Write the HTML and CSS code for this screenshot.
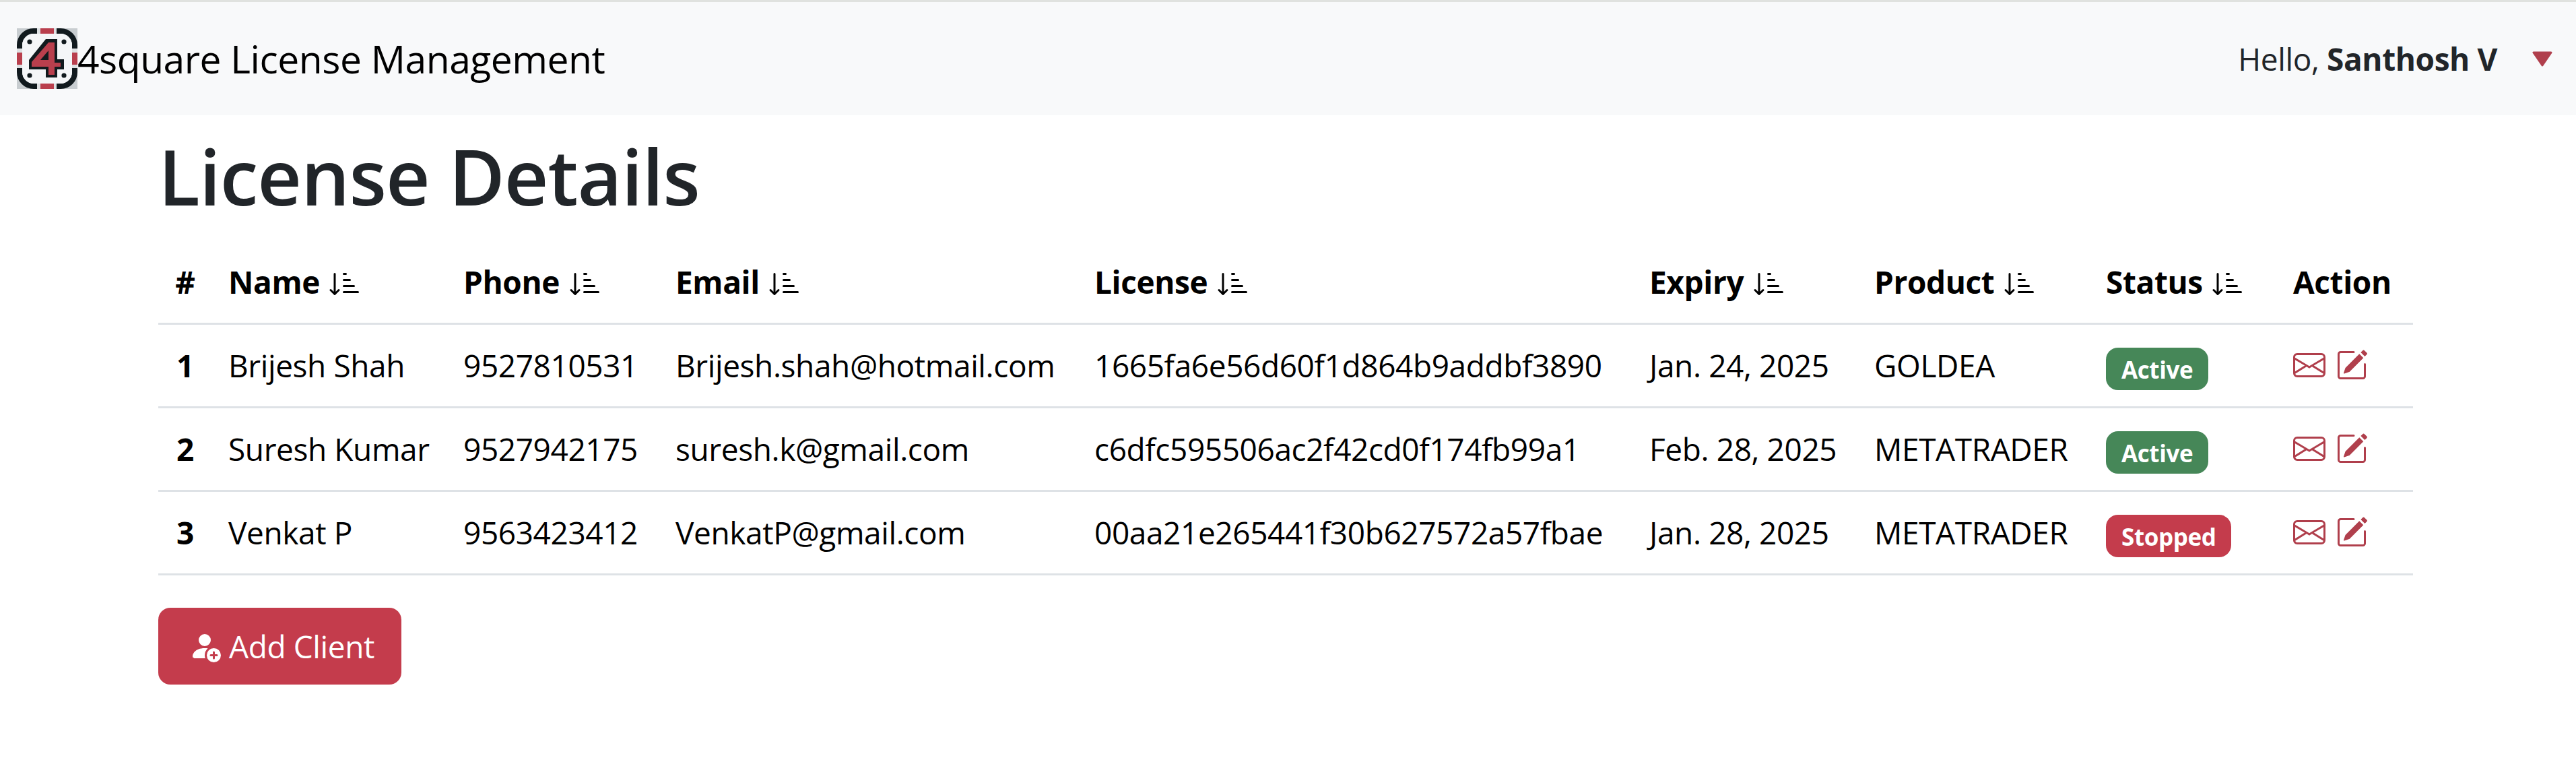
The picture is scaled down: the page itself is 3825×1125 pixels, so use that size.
FILE: index.html
```html
<!DOCTYPE html>
<html lang="en">
<head>
<meta charset="utf-8">
<title>4square License Management</title>
<link rel="stylesheet" href="styles.css">
</head>
<body>
<svg width="0" height="0" class="defs">
  <defs>
    <symbol id="sort" viewBox="0 0 16 16"><path d="M3.5 3.5a.5.5 0 0 0-1 0v8.793l-1.146-1.147a.5.5 0 0 0-.708.708l2 1.999.007.007a.497.497 0 0 0 .7-.006l2-2a.5.5 0 0 0-.707-.708L3.5 12.293V3.5zm4 .5a.5.5 0 0 1 0-1h1a.5.5 0 0 1 0 1h-1zm0 3a.5.5 0 0 1 0-1h3a.5.5 0 0 1 0 1h-3zm0 3a.5.5 0 0 1 0-1h5a.5.5 0 0 1 0 1h-5zM7 12.5a.5.5 0 0 0 .5.5h7a.5.5 0 0 0 0-1h-7a.5.5 0 0 0-.5.5z"/></symbol>
    <symbol id="mail" viewBox="0 0 16 16"><path d="M0 4a2 2 0 0 1 2-2h12a2 2 0 0 1 2 2v8a2 2 0 0 1-2 2H2a2 2 0 0 1-2-2V4Zm2-1a1 1 0 0 0-1 1v.217l7 4.2 7-4.2V4a1 1 0 0 0-1-1H2Zm13 2.383-4.708 2.825L15 11.105V5.383Zm-.034 6.876-5.64-3.471L8 9.583l-1.326-.795-5.64 3.47A1 1 0 0 0 2 13h12a1 1 0 0 0 .966-.741ZM1 11.105l4.708-2.897L1 5.383v5.722Z"/></symbol>
    <symbol id="edit" viewBox="0 0 16 16"><path d="M15.502 1.94a.5.5 0 0 1 0 .706L14.459 3.69l-2-2L13.502.646a.5.5 0 0 1 .707 0l1.293 1.293zm-1.75 2.456-2-2L4.939 9.21a.5.5 0 0 0-.121.196l-.805 2.414a.25.25 0 0 0 .316.316l2.414-.805a.5.5 0 0 0 .196-.12l6.813-6.814z"/><path d="M1 13.5A1.5 1.5 0 0 0 2.5 15h11a1.5 1.5 0 0 0 1.5-1.5v-6a.5.5 0 0 0-1 0v6a.5.5 0 0 1-.5.5h-11a.5.5 0 0 1-.5-.5v-11a.5.5 0 0 1 .5-.5H9a.5.5 0 0 0 0-1H2.5A1.5 1.5 0 0 0 1 2.5v11z"/></symbol>
  </defs>
</svg>
<nav class="navbar">
  <a class="brand" href="#">
    <svg class="logo" viewBox="0 0 90 90">
      <rect width="90" height="90" fill="#c8cdd0"/>
      <rect x="4" y="4" width="82" height="82" rx="21" fill="#f4f6f8" stroke="#111a1e" stroke-width="8"/>
      <rect x="30" y="0" width="5" height="90" fill="#dde0e2"/>
      <rect x="55" y="0" width="4" height="90" fill="#dde0e2"/>
      <rect x="0" y="30" width="90" height="6" fill="#dde0e2"/>
      <rect x="0" y="54" width="90" height="5" fill="#dde0e2"/>
      <rect x="8" y="8" width="74" height="74" rx="17" fill="#f4f6f8"/>
      <rect x="35" y="0" width="20" height="8" fill="#b93f4d"/>
      <rect x="35" y="82" width="20" height="8" fill="#b93f4d"/>
      <rect x="0" y="36" width="8" height="18" fill="#b93f4d"/>
      <rect x="82" y="36" width="8" height="18" fill="#b93f4d"/>
      <circle cx="19" cy="20" r="3.6" fill="#111a1e"/><circle cx="70" cy="20" r="3.6" fill="#111a1e"/>
      <circle cx="19" cy="70" r="3.6" fill="#111a1e"/><circle cx="70" cy="70" r="3.6" fill="#111a1e"/>
      <polygon points="43,16 60,16 60,46 70,46 70,61 60,61 60,73 43,73 43,61 18,61 18,47" fill="#111a1e"/>
      <polygon points="47,21 56,21 56,51 65,51 65,57 56,57 56,69 47,69 47,57 22,57 22,50" fill="#b93f4d"/>
      <polygon points="47,33 47,47 35,47" fill="#111a1e"/>
    </svg><span class="brand-text">4square License Management</span>
  </a>
  <div class="user">
    <span class="hello">Hello, <strong>Santhosh V</strong></span>
    <svg class="caret" viewBox="0 0 30 23"><path d="M2 2 H28 L15 21 Z"/></svg>
  </div>
</nav>
<main class="container">
  <h1 class="title">License Details</h1>
  <table class="table">
    <colgroup>
      <col class="c-num"><col class="c-name"><col class="c-phone"><col class="c-email"><col class="c-license"><col class="c-expiry"><col class="c-product"><col class="c-status"><col class="c-action">
    </colgroup>
    <thead>
      <tr>
        <th class="num">#</th>
        <th>Name <svg class="sort"><use href="#sort"/></svg></th>
        <th>Phone <svg class="sort"><use href="#sort"/></svg></th>
        <th>Email <svg class="sort"><use href="#sort"/></svg></th>
        <th>License <svg class="sort"><use href="#sort"/></svg></th>
        <th>Expiry <svg class="sort"><use href="#sort"/></svg></th>
        <th>Product <svg class="sort"><use href="#sort"/></svg></th>
        <th>Status <svg class="sort"><use href="#sort"/></svg></th>
        <th class="action-head">Action</th>
      </tr>
    </thead>
    <tbody>
      <tr>
        <th class="num">1</th><td>Brijesh Shah</td><td>9527810531</td><td>Brijesh.shah@hotmail.com</td><td>1665fa6e56d60f1d864b9addbf3890</td><td>Jan. 24, 2025</td><td>GOLDEA</td>
        <td><span class="badge active">Active</span></td>
        <td><div class="actions"><svg class="act"><use href="#mail"/></svg><svg class="act"><use href="#edit"/></svg></div></td>
      </tr>
      <tr>
        <th class="num">2</th><td>Suresh Kumar</td><td>9527942175</td><td>suresh.k@gmail.com</td><td>c6dfc595506ac2f42cd0f174fb99a1</td><td>Feb. 28, 2025</td><td>METATRADER</td>
        <td><span class="badge active">Active</span></td>
        <td><div class="actions"><svg class="act"><use href="#mail"/></svg><svg class="act"><use href="#edit"/></svg></div></td>
      </tr>
      <tr>
        <th class="num">3</th><td>Venkat P</td><td>9563423412</td><td>VenkatP@gmail.com</td><td>00aa21e265441f30b627572a57fbae</td><td>Jan. 28, 2025</td><td>METATRADER</td>
        <td><span class="badge stopped">Stopped</span></td>
        <td><div class="actions"><svg class="act"><use href="#mail"/></svg><svg class="act"><use href="#edit"/></svg></div></td>
      </tr>
    </tbody>
  </table>
  <a class="btn" href="#">
    <svg class="btn-icon" viewBox="0 0 16 16"><path d="M12.5 16a3.5 3.5 0 1 0 0-7 3.5 3.5 0 0 0 0 7Zm.5-5v1h1a.5.5 0 0 1 0 1h-1v1a.5.5 0 0 1-1 0v-1h-1a.5.5 0 0 1 0-1h1v-1a.5.5 0 0 1 1 0Zm-2-6a3 3 0 1 1-6 0 3 3 0 0 1 6 0Z"/><path d="M2 13c0 1 1 1 1 1h5.256A4.493 4.493 0 0 1 8 12.5a4.49 4.49 0 0 1 1.544-3.393C9.077 9.038 8.564 9 8 9c-5 0-6 3-6 4Z"/></svg>
    <span>Add Client</span>
  </a>
</main>
</body>
</html>
```
FILE: styles.css
```css
* { box-sizing: border-box; }
html, body { margin: 0; padding: 0; }
body {
  background: #fff;
  color: #212529;
  font-family: "Open Sans", "Noto Sans", sans-serif;
  font-size: 46px;
  line-height: 72px;
  letter-spacing: -0.4px;
}
.defs { position: absolute; }
a { text-decoration: none; }

.navbar {
  display: flex;
  align-items: center;
  justify-content: space-between;
  height: 171px;
  border-top: 3px solid #e0e2df;
  background: #f8f9fa;
  padding: 0 35px 0 25px;
}
.brand { display: flex; align-items: center; color: #000; }
.logo { width: 90px; height: 90px; display: block; }
.brand-text { font-size: 57px; line-height: 90px; letter-spacing: -0.5px; }
.user { display: flex; align-items: center; gap: 52px; }
.hello { line-height: 72px; }
.caret { width: 30px; height: 23px; fill: #b03f4c; stroke: #b03f4c; stroke-width: 3; stroke-linejoin: round; }

.container { padding: 18px 242px 0 235px; }
.title {
  margin: 0 0 24px;
  font-size: 114px;
  font-weight: 600;
  line-height: 144px;
  letter-spacing: -1px;
}

.table {
  width: 3348px;
  table-layout: fixed;
  border-collapse: collapse;
  margin-bottom: 48px;
  color: #000;
}
.c-num { width: 80px; }
.c-name { width: 349px; }
.c-phone { width: 315px; }
.c-email { width: 622px; }
.c-license { width: 824px; }
.c-expiry { width: 334px; }
.c-product { width: 344px; }
.c-status { width: 278px; }
.c-action { width: 202px; }
.table th, .table td {
  padding: 24px;
  height: 123px;
  text-align: left;
  vertical-align: middle;
  white-space: nowrap;
  border-bottom: 3px solid #dee2e6;
}
.table th { font-weight: 700; }
.table th.num { text-align: center; }
.sort { width: 48px; height: 48px; vertical-align: -8px; fill: #000; margin-left: 2px; }

.badge {
  display: inline-block;
  height: 63px;
  padding: 0 23px;
  border-radius: 18px;
  color: #fff;
  font-size: 35px;
  font-weight: 700;
  line-height: 66px;
  vertical-align: middle;
}
.active { background: #468758; }
.stopped { background: #c43c4c; }

.actions { display: flex; gap: 15px; }
.act { width: 48px; height: 48px; fill: #b03f4c; }

.btn {
  display: inline-flex;
  align-items: center;
  gap: 12px;
  height: 114px;
  width: 361px;
  padding: 0 40px 0 45px;
  border-radius: 18px;
  background: #c43c4c;
  color: #fff;
}
.btn-icon { width: 48px; height: 48px; fill: #fff; }
```
